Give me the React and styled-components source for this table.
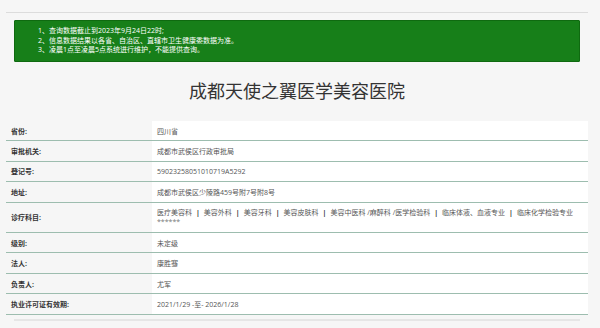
import React from 'react';
import styled, { createGlobalStyle } from 'styled-components';

const GlobalStyle = createGlobalStyle`
  body {
    margin: 0;
    background: #f6f6f6;
    font-family: "Open Sans", "Noto Sans CJK SC", sans-serif;
  }
`;

const rows = [
    ['省份:', '四川省'],
    ['审批机关:', '成都市武侯区行政审批局'],
    ['登记号:', '59023258051010719A5292'],
    ['地址:', '成都市武侯区少陵路459号附7号附8号'],
    ['诊疗科目:', null],
    ['级别:', '未定级'],
    ['法人:', '康胜骞'],
    ['负责人:', '尤军'],
    ['执业许可证有效期:', '2021/1/29 -至- 2026/1/28'],
];

const subjects = ['医疗美容科', '美容外科', '美容牙科', '美容皮肤科', '美容中医科 /麻醉科 /医学检验科', '临床体液、血液专业', '临床化学检验专业'];

const App = () => {
    return (
        <Page>
            <GlobalStyle/>
            <Divider/>
            <Notice>
                <li>1、查询数据截止到2023年9月24日22时;</li>
                <li>2、信息数据结果以各省、自治区、直辖市卫生健康委数据为准。</li>
                <li>3、凌晨1点至凌晨5点系统进行维护，不能提供查询。</li>
            </Notice>
            <Title>成都天使之翼医学美容医院</Title>
            <Table>
                {rows.map(([label, value]) => (
                    <Row key={label} tall={value === null}>
                        <Label>{label}</Label>
                        <Value tall={value === null}>
                            {value === null ? (
                                <>
                                    <Line>
                                        {subjects.map((s, i) => (
                                            <React.Fragment key={s}>
                                                {i > 0 && <Sep>|</Sep>}
                                                {s}
                                            </React.Fragment>
                                        ))}
                                    </Line>
                                    <Stars>******</Stars>
                                </>
                            ) : value}
                        </Value>
                    </Row>
                ))}
            </Table>
            <Shadow/>
        </Page>
    );
};

const Page = styled.div`
  width: 582px;
  padding: 12px 12px 0 6px;
`;

const Divider = styled.div`
  height: 1px;
  background: #dcdcdc;
`;

const Notice = styled.ul`
  margin: 7px 8px 0 8px;
  padding: 5px 0 0 23px;
  height: 35px;
  list-style: none;
  background: #177f19;
  border: 1px solid #0f6a10;
  border-radius: 1px;

  li {
    color: #fff;
    font-size: 7px;
    line-height: 9.5px;
  }
`;

const Title = styled.h1`
  margin: 16px 0 0 0;
  text-align: center;
  font-size: 18px;
  line-height: 24px;
  font-weight: 400;
  color: #333;
  font-family: "Noto Sans CJK SC", sans-serif;
`;

const Table = styled.div`
  margin-top: 19px;
`;

const Row = styled.div`
  box-sizing: border-box;
  display: grid;
  grid-template-columns: 146px 1fr;
  height: ${p => (p.tall ? '30.5px' : '20.4px')};
  border-bottom: 1px solid #9dbdaf;
`;

const Label = styled.div`
  display: flex;
  align-items: center;
  padding-left: 5px;
  font-size: 7px;
  font-weight: 700;
  color: #333;
`;

const Value = styled.div`
  background: #fff;
  padding: ${p => (p.tall ? '5px 0 0 5px' : '0 5px')};
  display: ${p => (p.tall ? 'block' : 'flex')};
  align-items: center;
  line-height: ${p => (p.tall ? '10px' : 'normal')};
  font-size: 7px;
  color: #555;
`;

const Line = styled.div`
  white-space: nowrap;
`;

const Sep = styled.span`
  margin: 0 4px;
  font-weight: 700;
  color: #333;
`;

const Stars = styled.div`
  color: #777;
  line-height: 8px;
`;

const Shadow = styled.div`
  margin: 4px 8px 0 8px;
  height: 2px;
  background: #e6e6e6;
`;

export default App;
